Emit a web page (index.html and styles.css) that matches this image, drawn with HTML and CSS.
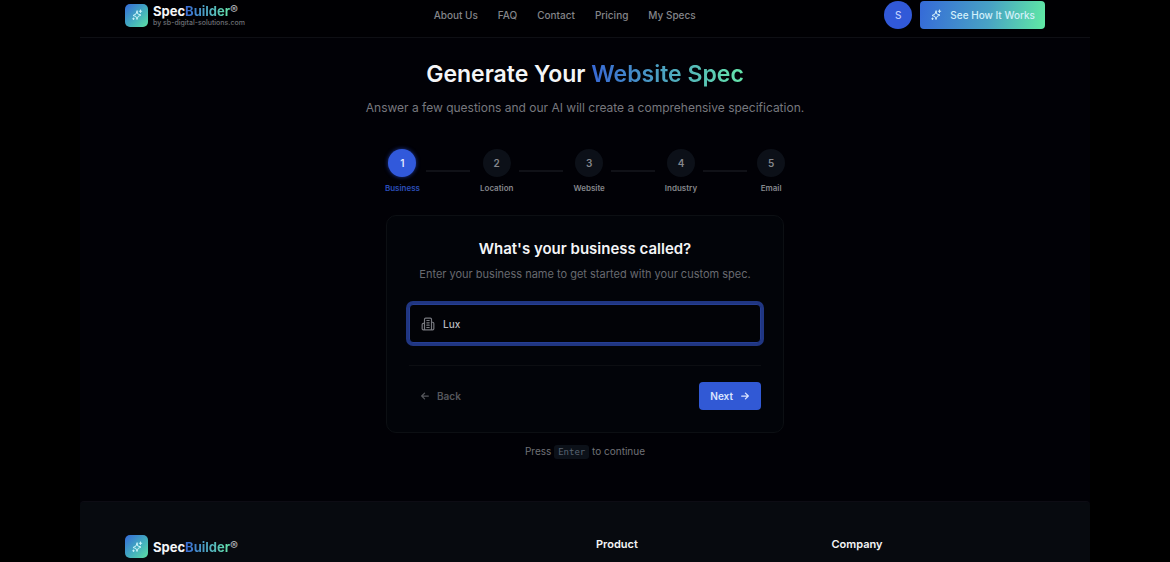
FILE: index.html
```html
<!DOCTYPE html>
<html lang="en">
<head>
<meta charset="utf-8">
<meta name="viewport" content="width=device-width, initial-scale=1">
<title>SpecBuilder</title>
<link rel="stylesheet" href="styles.css">
</head>
<body>
<svg class="sprite" aria-hidden="true">
  <symbol id="sparkles" viewBox="0 0 24 24">
    <path d="M12 4l-2 6-6 3 6 2 2 6 2-6 6-3-6-2z"/>
    <path d="M19 2v5M16.500 4.500h5M5 18v3M3.500 19.500h3"/>
  </symbol>
</svg>
<div class="page">
  <header class="header">
    <a class="brand" href="#">
      <span class="brand-mark"><svg class="icon"><use href="#sparkles"/></svg></span>
      <span class="brand-text">
        <span class="brand-name">Spec<span class="gradient-text">Builder</span><span class="reg">®</span></span>
        <span class="brand-by">by sb-digital-solutions.com</span>
      </span>
    </a>
    <nav class="nav">
      <a href="#">About Us</a>
      <a href="#">FAQ</a>
      <a href="#">Contact</a>
      <a href="#">Pricing</a>
      <a href="#">My Specs</a>
    </nav>
    <div class="actions">
      <button class="avatar" type="button">S</button>
      <button class="cta" type="button"><svg class="icon"><use href="#sparkles"/></svg>See How It Works</button>
    </div>
  </header>

  <main class="main">
    <h1 class="title">Generate Your <span class="gradient-text">Website Spec</span></h1>
    <p class="lead">Answer a few questions and our AI will create a comprehensive specification.</p>

    <ol class="steps">
      <li class="step active"><span class="dot">1</span><span class="step-label">Business</span></li>
      <li class="line"></li>
      <li class="step"><span class="dot">2</span><span class="step-label">Location</span></li>
      <li class="line"></li>
      <li class="step"><span class="dot">3</span><span class="step-label">Website</span></li>
      <li class="line"></li>
      <li class="step"><span class="dot">4</span><span class="step-label">Industry</span></li>
      <li class="line"></li>
      <li class="step"><span class="dot">5</span><span class="step-label">Email</span></li>
    </ol>

    <form class="card">
      <h2 class="card-title"><label for="business">What's your business called?</label></h2>
      <p class="card-text">Enter your business name to get started with your custom spec.</p>
      <div class="field">
        <svg class="icon field-icon" viewBox="0 0 24 24" aria-hidden="true">
          <path d="M6 22V4a2 2 0 0 1 2-2h8a2 2 0 0 1 2 2v18zM6 11H4a2 2 0 0 0-2 2v7a2 2 0 0 0 2 2h2M18 9h2a2 2 0 0 1 2 2v9a2 2 0 0 1-2 2h-2M10 6h4M10 10h4M10 14h4M10 18h4"/>
        </svg>
        <input class="input" id="business" type="text" value="Lux">
      </div>
      <div class="card-actions">
        <button class="back" type="button"><svg class="icon arrow" viewBox="0 0 24 24"><path d="M20 12H4M11 5l-7 7 7 7"/></svg>Back</button>
        <button class="next" type="button">Next<svg class="icon arrow" viewBox="0 0 24 24"><path d="M4 12h16M13 5l7 7-7 7"/></svg></button>
      </div>
    </form>
    <p class="hint">Press <kbd>Enter</kbd> to continue</p>
  </main>

  <footer class="footer">
    <div class="footer-brand">
      <a class="brand" href="#">
        <span class="brand-mark"><svg class="icon"><use href="#sparkles"/></svg></span>
        <span class="brand-name">Spec<span class="gradient-text">Builder</span><span class="reg">®</span></span>
      </a>
    </div>
    <h3 class="footer-title">Product</h3>
    <h3 class="footer-title">Company</h3>
  </footer>
</div>
</body>
</html>
```
FILE: styles.css
```css
* { box-sizing: border-box; }

body {
  margin: 0;
  background: #000;
  color: #f4f5f7;
  font-family: Inter, "Liberation Sans", sans-serif;
  font-size: 10px;
}

h1, h2, h3, p, ol { margin: 0; padding: 0; }
a { color: inherit; text-decoration: none; }
button, input { font: inherit; color: inherit; }
button { border: 0; cursor: pointer; }

.sprite { position: absolute; width: 0; height: 0; }

.icon {
  width: 12px;
  height: 12px;
  flex: none;
  fill: none;
  stroke: currentColor;
  stroke-width: 2;
  stroke-linecap: round;
  stroke-linejoin: round;
}

.page {
  display: flex;
  flex-direction: column;
  min-height: 100vh;
  margin: 0 80px;
  background: #010106;
}

.header {
  display: flex;
  justify-content: space-between;
  align-items: center;
  padding: 1px 45px 8px;
  border-bottom: 1px solid #0e0f14;
  background: #000003;
}

.brand { display: flex; align-items: center; gap: 5px; }

.brand-mark {
  display: grid;
  place-items: center;
  width: 23px;
  height: 23px;
  border-radius: 5px;
  color: #c8f2fa;
  background: linear-gradient(135deg, #3469d8, #43aebe 55%, #5de0a4);
}

.brand-text { display: flex; flex-direction: column; }
.brand-name { font-size: 13px; line-height: 16px; font-weight: 700; }
.brand-by { color: #6c6e73; font-size: 7px; line-height: 8px; font-weight: 500; }
.reg { color: #a3a6aa; font-size: 12px; line-height: 8px; vertical-align: 2px; }

.gradient-text {
  color: transparent;
  background: linear-gradient(90deg, #3768d5, #65e5aa);
  background-clip: text;
}

.nav { display: flex; gap: 20px; color: #84858a; font-weight: 500; }

.actions { display: flex; justify-content: flex-end; align-items: center; gap: 8px; }

.avatar {
  width: 28px;
  height: 28px;
  padding: 0;
  border-radius: 50%;
  background: #3159d8;
  color: #c2d0ff;
  font-weight: 500;
}

.cta {
  display: flex;
  align-items: center;
  gap: 8px;
  height: 28px;
  padding: 0 10px;
  border-radius: 4px;
  color: #d2f0fa;
  background: linear-gradient(100deg, #356ad8, #48a2c4 55%, #60eaa4);
  font-weight: 500;
}

.main {
  display: flex;
  flex-direction: column;
  align-items: center;
  padding: 20px 24px 41px;
}

.title { font-size: 23px; line-height: 32px; font-weight: 600; }
.lead { margin-top: 9px; color: #77787e; font-size: 12px; line-height: 18px; }

.steps { display: flex; align-items: center; margin-top: 32px; list-style: none; }
.step { display: flex; flex-direction: column; align-items: center; gap: 6px; color: #85878c; }

.dot {
  display: grid;
  place-items: center;
  width: 28px;
  height: 28px;
  border-radius: 50%;
  background: #0c1018;
  font-weight: 600;
}

.step-label { font-size: 8px; line-height: 10px; font-weight: 600; }
.active .dot { background: #3159db; color: #e2eaff; box-shadow: 0 0 4px #1d389a; }
.active .step-label { color: #2b4eb9; }
.line { width: 44px; height: 2px; margin: 0 10px 0 6px; background: #101117; }

.card {
  width: 100%;
  max-width: 398px;
  margin-top: 22px;
  padding: 22px;
  border: 1px solid #0c0f13;
  border-radius: 10px;
  background: #020409;
  text-align: center;
}

.card-title { font-size: 15px; line-height: 22px; font-weight: 600; }
.card-text { margin-top: 6px; color: #686a70; font-size: 11px; line-height: 16px; }

.field {
  display: flex;
  align-items: center;
  gap: 8px;
  height: 39px;
  margin-top: 22px;
  padding: 0 11px;
  border: 1px solid #253e94;
  border-radius: 4px;
  background: #020307;
  box-shadow: 0 0 0 3px #203682;
}

.field-icon { width: 14px; height: 14px; color: #77797f; }

.input {
  flex: 1;
  min-width: 0;
  padding: 0;
  border: 0;
  outline: 0;
  background: none;
  color: #b9bbc0;
  font-weight: 500;
}

.card-actions {
  display: flex;
  justify-content: space-between;
  margin-top: 22px;
  padding-top: 16px;
  border-top: 1px solid #0c0e12;
}

.back, .next {
  display: flex;
  align-items: center;
  gap: 7px;
  height: 28px;
  padding: 0 11px;
  border-radius: 4px;
  font-weight: 600;
}

.arrow { width: 10px; height: 10px; stroke-width: 3; }
.back { background: none; color: #55575c; }
.next { background: #3159d5; color: #dce5ff; }

.hint { margin-top: 10px; color: #707177; line-height: 16px; }

kbd {
  padding: 2px 4px;
  border-radius: 3px;
  background: #0c1119;
  color: #596472;
  font-family: "DejaVu Sans Mono", monospace;
  font-size: 9px;
}

.footer {
  flex: 1;
  display: grid;
  grid-template-columns: repeat(4, 1fr);
  align-items: start;
  column-gap: 22px;
  padding: 33px 45px 0;
  border-top: 1px solid #0d0c14;
  border-radius: 4px 4px 0 0;
  background: #070a0f;
}

.footer-brand { grid-column: span 2; }
.footer-title { padding-top: 1px; font-size: 11px; line-height: 16px; font-weight: 600; }
```
